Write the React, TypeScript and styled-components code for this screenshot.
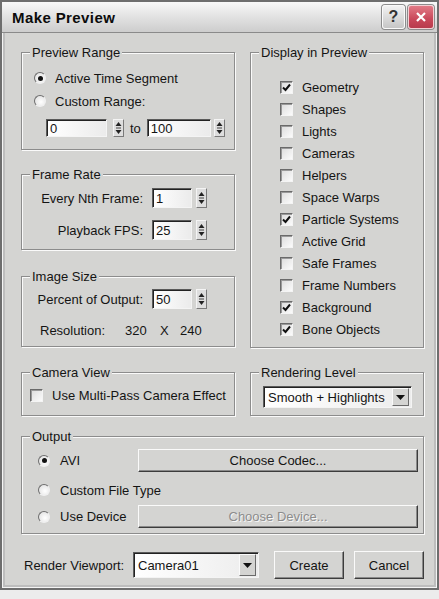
import React from 'react';
import styled, { createGlobalStyle } from 'styled-components';

const FACE = '#d4d4d2';

const GlobalStyle = createGlobalStyle`
  html, body {
    margin: 0;
    padding: 0;
    background: #ececec;
  }
  body {
    font-family: "Liberation Sans", Arial, sans-serif;
    font-size: 13px;
    color: #141414;
  }
`;

const Window = styled.div`
  box-sizing: border-box;
  width: 439px;
  height: 590px;
  background: ${FACE};
  border: 2px solid #6e6e6e;
  box-shadow: inset 0 0 0 1px #f4f4f4, inset 0 0 0 3px #bdbdbd;
  display: flex;
  flex-direction: column;
`;

const TitleBar = styled.div`
  box-sizing: border-box;
  height: 31px;
  display: flex;
  align-items: center;
  gap: 3px;
  padding: 0 3px 0 10px;
  background: linear-gradient(#f8f8f8, #e6e6e6 40%, #cdcdcd);
  border-bottom: 1px solid #8a8a8a;
`;

const Title = styled.div`
  flex: 1;
  font-size: 15px;
  font-weight: bold;
  color: #0c0c0c;
  letter-spacing: 0.4px;
`;

const TitleButton = styled.div<{ $close?: boolean }>`
  box-sizing: border-box;
  width: ${p => (p.$close ? 26 : 23)}px;
  height: 24px;
  border-radius: 3px;
  border: 1px solid ${p => (p.$close ? '#f4d0d4' : '#fafafa')};
  background: ${p =>
    p.$close ? 'linear-gradient(#e27a86, #c9485a 60%, #b83a4c)' : 'linear-gradient(#f2f2f2, #c6c6c6)'};
  box-shadow: 0 0 0 1px #8c8c8c;
  display: flex;
  align-items: center;
  justify-content: center;
  font-weight: bold;
  font-size: 16px;
  color: #333;
`;

const Body = styled.div`
  flex: 1;
  display: flex;
  flex-direction: column;
  padding: 19px 13px 0 19px;
`;

const Columns = styled.div<{ $mt?: number }>`
  display: flex;
  gap: 15px;
  margin-top: ${p => p.$mt ?? 0}px;
`;

const Column = styled.div<{ $w?: number }>`
  display: flex;
  flex-direction: column;
  ${p => (p.$w ? `width: ${p.$w}px;` : 'flex: 1;')}
`;

const Group = styled.div<{ $h: number; $mt?: number }>`
  box-sizing: border-box;
  height: ${p => p.$h}px;
  margin-top: ${p => p.$mt ?? 0}px;
  border: 1px solid #8c8c8c;
  box-shadow: inset 1px 1px 0 #fafafa, 1px 1px 0 #fafafa;
  display: flex;
  flex-direction: column;
`;

const Caption = styled.div`
  align-self: flex-start;
  margin: -8px 0 0 8px;
  padding: 0 2px;
  line-height: 16px;
  background: ${FACE};
`;

const GroupBody = styled.div<{ $pad: string; $gap?: number }>`
  display: flex;
  flex-direction: column;
  padding: ${p => p.$pad};
  gap: ${p => p.$gap ?? 0}px;
`;

const Row = styled.div<{ $mt?: number; $ml?: number; $h?: number; $w?: number }>`
  display: flex;
  align-items: center;
  height: ${p => p.$h ?? 16}px;
  margin-top: ${p => p.$mt ?? 0}px;
  margin-left: ${p => p.$ml ?? 0}px;
  ${p => (p.$w ? `width: ${p.$w}px; flex: none;` : '')}
  white-space: nowrap;
`;

const Radio = styled.span<{ $on?: boolean }>`
  box-sizing: border-box;
  flex: none;
  width: 12px;
  height: 12px;
  border-radius: 50%;
  border: 1px solid;
  border-color: #6e6e6e #f0f0f0 #f0f0f0 #6e6e6e;
  background: radial-gradient(circle at 60% 60%, #ffffff, #dcdcdc);
  display: flex;
  align-items: center;
  justify-content: center;
  &::after {
    content: '';
    width: 5px;
    height: 5px;
    border-radius: 50%;
    background: ${p => (p.$on ? '#111' : 'transparent')};
  }
`;

const CheckBox = styled.span`
  box-sizing: border-box;
  flex: none;
  width: 13px;
  height: 13px;
  border: 1px solid;
  border-color: #6a6a6a #f4f4f4 #f4f4f4 #6a6a6a;
  box-shadow: inset 1px 1px 0 #9a9a9a;
  background: linear-gradient(135deg, #dcdcdc, #fbfbfb);
  display: flex;
  align-items: center;
  justify-content: center;
`;

const Text = styled.span<{ $ml?: number; $w?: number; $right?: boolean }>`
  margin-left: ${p => p.$ml ?? 0}px;
  ${p => (p.$w ? `width: ${p.$w}px; flex: none;` : '')}
  text-align: ${p => (p.$right ? 'right' : 'left')};
`;

const TextBox = styled.div<{ $w: number; $h?: number; $ml?: number }>`
  box-sizing: border-box;
  flex: none;
  width: ${p => p.$w}px;
  height: ${p => p.$h ?? 18}px;
  margin-left: ${p => p.$ml ?? 0}px;
  border: 1px solid;
  border-color: #5a5a5a #f4f4f4 #f4f4f4 #5a5a5a;
  box-shadow: inset 1px 1px 0 #222;
  background: linear-gradient(90deg, #ffffff, #ebebeb);
  padding: 0 3px;
  display: flex;
  align-items: center;
  line-height: 1;
`;

const SpinBox = styled.div<{ $h?: number; $ml?: number }>`
  box-sizing: border-box;
  flex: none;
  width: 11px;
  height: ${p => p.$h ?? 18}px;
  margin-left: ${p => p.$ml ?? 0}px;
  border: 1px solid;
  border-color: #f4f4f4 #7a7a7a #7a7a7a #f4f4f4;
  background: #dedede;
  display: flex;
  align-items: center;
  justify-content: center;
`;

const Button = styled.div<{ $w?: number; $h?: number; $ml?: number; $disabled?: boolean }>`
  box-sizing: border-box;
  ${p => (p.$w ? `width: ${p.$w}px; flex: none;` : 'flex: 1;')}
  height: ${p => p.$h ?? 23}px;
  margin-left: ${p => p.$ml ?? 0}px;
  border: 1px solid;
  border-color: #fafafa #3c3c3c #3c3c3c #fafafa;
  box-shadow: inset -1px -1px 0 #8a8a8a;
  background: ${FACE};
  display: flex;
  align-items: center;
  justify-content: center;
  color: ${p => (p.$disabled ? '#8c8c8c' : 'inherit')};
  text-shadow: ${p => (p.$disabled ? '1px 1px 0 #f6f6f6' : 'none')};
`;

const DropDown = styled.div<{ $w: number; $h: number; $ml?: number }>`
  box-sizing: border-box;
  flex: none;
  width: ${p => p.$w}px;
  height: ${p => p.$h}px;
  margin-left: ${p => p.$ml ?? 0}px;
  border: 1px solid;
  border-color: #5a5a5a #f4f4f4 #f4f4f4 #5a5a5a;
  box-shadow: inset 1px 1px 0 #222;
  background: linear-gradient(90deg, #ffffff, #ececec);
  display: flex;
  align-items: center;
  padding: 1px 2px 1px 4px;
`;

const DropValue = styled.span`
  flex: 1;
`;

const DropArrow = styled.span`
  box-sizing: border-box;
  width: 17px;
  height: 100%;
  border: 1px solid;
  border-color: #fafafa #6a6a6a #6a6a6a #fafafa;
  background: ${FACE};
  display: flex;
  align-items: center;
  justify-content: center;
`;

const Spinner = ({ h, ml }: { h?: number; ml?: number }) => (
  <SpinBox $h={h} $ml={ml}>
    <svg width="7" height="14" viewBox="0 0 7 14">
      <path d="M3.5 1 L6.5 5 L0.5 5 Z" fill="#222" />
      <path d="M1 7 H6" stroke="#444" strokeWidth="1" />
      <path d="M3.5 13 L6.5 9 L0.5 9 Z" fill="#222" />
    </svg>
  </SpinBox>
);

const Arrow = () => (
  <DropArrow>
    <svg width="9" height="5" viewBox="0 0 9 5">
      <path d="M0 0 H9 L4.5 5 Z" fill="#111" />
    </svg>
  </DropArrow>
);

const Check = ({ on, label }: { on?: boolean; label: string }) => (
  <Row>
    <CheckBox>
      {on && (
        <svg width="9" height="9" viewBox="0 0 9 9">
          <path d="M1 4.5 L3.5 7 L8 1.5" stroke="#111" strokeWidth="2" fill="none" />
        </svg>
      )}
    </CheckBox>
    <Text $ml={9}>{label}</Text>
  </Row>
);

const Option = ({ on, label, gap = 9, w }: { on?: boolean; label: string; gap?: number; w?: number }) => (
  <Row $w={w}>
    <Radio $on={on} />
    <Text $ml={gap}>{label}</Text>
  </Row>
);

const displayItems: [string, boolean][] = [
  ['Geometry', true],
  ['Shapes', false],
  ['Lights', false],
  ['Cameras', false],
  ['Helpers', false],
  ['Space Warps', false],
  ['Particle Systems', true],
  ['Active Grid', false],
  ['Safe Frames', false],
  ['Frame Numbers', false],
  ['Background', true],
  ['Bone Objects', true],
];

const App = () => (
  <>
    <GlobalStyle />
    <Window>
      <TitleBar>
        <Title>Make Preview</Title>
        <TitleButton>?</TitleButton>
        <TitleButton $close>
          <svg width="12" height="12" viewBox="0 0 12 12">
            <path d="M2 2 L10 10 M10 2 L2 10" stroke="#fff" strokeWidth="2.2" />
          </svg>
        </TitleButton>
      </TitleBar>

      <Body>
        <Columns>
          <Column $w={214}>
            <Group $h={98}>
              <Caption>Preview Range</Caption>
              <GroupBody $pad="9px 0 0 12px" $gap={7}>
                <Option on label="Active Time Segment" />
                <Option label="Custom Range:" />
                <Row $mt={3} $ml={12} $h={18}>
                  <TextBox $w={61}>0</TextBox>
                  <Spinner ml={6} />
                  <Text $ml={6}>to</Text>
                  <TextBox $w={64} $ml={6}>100</TextBox>
                  <Spinner ml={3} />
                </Row>
              </GroupBody>
            </Group>

            <Group $h={76} $mt={24}>
              <Caption>Frame Rate</Caption>
              <GroupBody $pad="5px 0 0 0" $gap={12}>
                <Row $h={20}>
                  <Text $w={121} $right>Every Nth Frame:</Text>
                  <TextBox $w={40} $h={20} $ml={9}>1</TextBox>
                  <Spinner h={20} ml={4} />
                </Row>
                <Row $h={20}>
                  <Text $w={121} $right>Playback FPS:</Text>
                  <TextBox $w={40} $h={20} $ml={9}>25</TextBox>
                  <Spinner h={20} ml={4} />
                </Row>
              </GroupBody>
            </Group>

            <Group $h={71} $mt={26}>
              <Caption>Image Size</Caption>
              <GroupBody $pad="4px 0 0 0" $gap={13}>
                <Row $h={20}>
                  <Text $w={121} $right>Percent of Output:</Text>
                  <TextBox $w={40} $h={20} $ml={9}>50</TextBox>
                  <Spinner h={20} ml={4} />
                </Row>
                <Row $ml={18}>
                  <Text $w={85}>Resolution:</Text>
                  <Text $w={35}>320</Text>
                  <Text $w={20}>X</Text>
                  <Text>240</Text>
                </Row>
              </GroupBody>
            </Group>
          </Column>

          <Column>
            <Group $h={296}>
              <Caption>Display in Preview</Caption>
              <GroupBody $pad="18px 0 0 29px" $gap={6}>
                {displayItems.map(([label, on]) => (
                  <Check key={label} label={label} on={on} />
                ))}
              </GroupBody>
            </Group>
          </Column>
        </Columns>

        <Columns $mt={24}>
          <Column $w={214}>
            <Group $h={44}>
              <Caption>Camera View</Caption>
              <GroupBody $pad="6px 0 0 8px">
                <Check label="Use Multi-Pass Camera Effect" />
              </GroupBody>
            </Group>
          </Column>
          <Column>
            <Group $h={44}>
              <Caption>Rendering Level</Caption>
              <GroupBody $pad="5px 0 0 12px">
                <DropDown $w={149} $h={22}>
                  <DropValue>Smooth + Highlights</DropValue>
                  <Arrow />
                </DropDown>
              </GroupBody>
            </Group>
          </Column>
        </Columns>

        <Group $h={98} $mt={20}>
          <Caption>Output</Caption>
          <GroupBody $pad="4px 5px 0 16px">
            <Row $h={23}>
              <Option on label="AVI" gap={10} w={100} />
              <Button>Choose Codec...</Button>
            </Row>
            <Row $mt={10}>
              <Option label="Custom File Type" gap={10} />
            </Row>
            <Row $h={23} $mt={7}>
              <Option label="Use Device" gap={10} w={100} />
              <Button $disabled>Choose Device...</Button>
            </Row>
          </GroupBody>
        </Group>

        <Row $h={28} $mt={17} $ml={3}>
          <Text $w={109}>Render Viewport:</Text>
          <DropDown $w={126} $h={26}>
            <DropValue>Camera01</DropValue>
            <Arrow />
          </DropDown>
          <Button $w={70} $h={28} $ml={15}>Create</Button>
          <Button $w={70} $h={28} $ml={10}>Cancel</Button>
        </Row>
      </Body>
    </Window>
  </>
);

export default App;
